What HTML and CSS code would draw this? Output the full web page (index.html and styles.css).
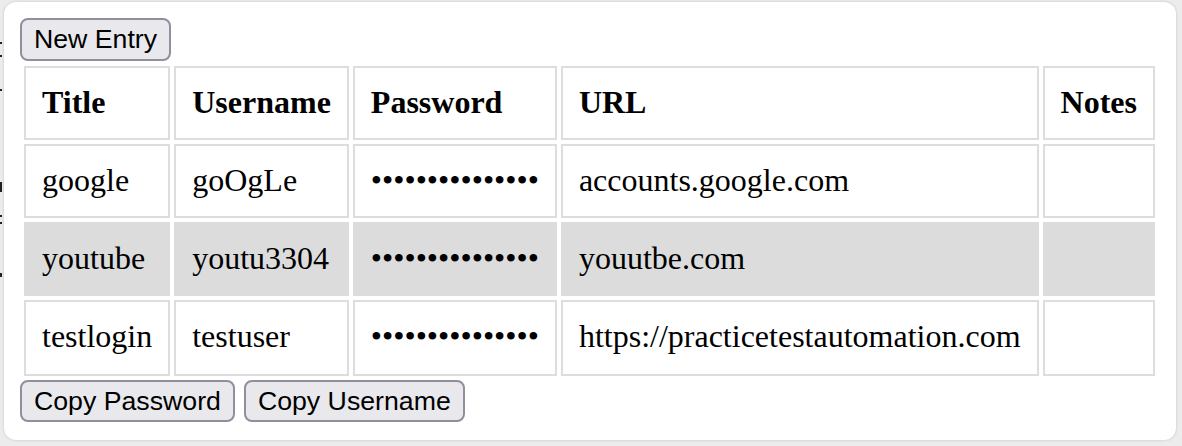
FILE: index.html
```html
<!DOCTYPE html>
<html>
<head>
<meta charset="utf-8">
<link rel="stylesheet" href="styles.css">
</head>
<body>
<div class="behind">
  <span class="mark m1"></span>
  <span class="mark m2"></span>
  <span class="mark m3"></span>
  <span class="mark m4"></span>
  <span class="mark m5"></span>
  <span class="mark m6"></span>
  <span class="mark m7"></span>
</div>
<div class="popup">
  <div class="toolbar">
    <button class="btn">New Entry</button>
  </div>
  <table class="entries">
    <thead>
      <tr><th>Title</th><th>Username</th><th>Password</th><th>URL</th><th>Notes</th></tr>
    </thead>
    <tbody>
      <tr><td>google</td><td>goOgLe</td><td class="pw">•••••••••••••••</td><td>accounts.google.com</td><td></td></tr>
      <tr class="selected"><td>youtube</td><td>youtu3304</td><td class="pw">•••••••••••••••</td><td>youutbe.com</td><td></td></tr>
      <tr class="last"><td>testlogin</td><td>testuser</td><td class="pw">•••••••••••••••</td><td>https://practicetestautomation.com</td><td></td></tr>
    </tbody>
  </table>
  <div class="actions">
    <button class="btn">Copy Password</button>
    <button class="btn">Copy Username</button>
  </div>
</div>
</body>
</html>
```

FILE: styles.css
```css
html, body {
  margin: 0;
  padding: 0;
}
body {
  background: #ececec;
  width: 1182px;
  height: 446px;
  overflow: hidden;
  position: relative;
  box-sizing: border-box;
  padding: 2px 6px 6px 4px;
}
.behind {
  position: absolute;
  left: 0;
  top: 0;
  width: 4px;
  height: 446px;
}
.mark {
  position: absolute;
  left: 0;
  width: 2px;
  background: #222;
}
.m1 { top: 42px; height: 2px; }
.m2 { top: 55px; height: 2px; }
.m3 { top: 89px; height: 2px; }
.m4 { top: 182px; height: 10px; }
.m5 { top: 215px; height: 2px; }
.m6 { top: 222px; height: 2px; }
.m7 { top: 273px; height: 4px; }
.popup {
  position: relative;
  height: 438px;
  background: #fff;
  border-radius: 12px;
  box-shadow: 0 0 3px rgba(0, 0, 0, 0.18);
  box-sizing: border-box;
  padding: 16px;
}
.btn {
  font-family: "Liberation Sans", Arial, sans-serif;
  font-size: 26.7px;
  color: #000;
  background: #e9e9ed;
  border: 2px solid #8f8f9d;
  border-radius: 8px;
  padding: 0 12px;
  height: 43px;
  margin: 0;
  line-height: 39px;
}
.toolbar {
  display: flex;
}
.entries {
  border-collapse: separate;
  border-spacing: 4px;
  font-family: "Liberation Serif", "Times New Roman", serif;
  font-size: 32px;
  color: #000;
  margin-top: 1px;
}
.entries th,
.entries td {
  border: 2px solid #dddddd;
  padding: 16px;
  text-align: left;
  white-space: nowrap;
  line-height: 38px;
}
.entries th {
  font-weight: bold;
  padding-top: 15px;
  padding-bottom: 17px;
}
.entries td {
  padding-top: 15px;
  padding-bottom: 17px;
}
.entries tr.last td {
  padding-bottom: 19px;
}
.entries tr.selected td {
  background: #dcdcdc;
  border-color: #dcdcdc;
}
.actions {
  display: flex;
  gap: 9px;
  margin-top: 0;
}
.actions .btn {
  height: 42px;
  line-height: 38px;
}
```
